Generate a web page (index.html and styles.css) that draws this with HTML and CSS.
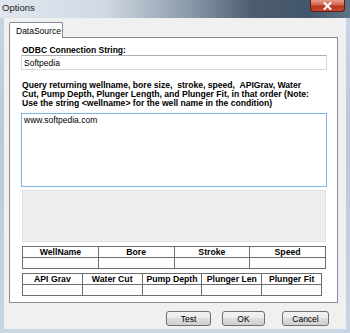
FILE: index.html
```html
<html lang="en">
  <head>
    <title>Options</title>
    <meta charset="utf-8">
    <link rel="stylesheet" href="styles.css">
  </head>
  <body>
    <div class="window">
      <div class="titlebar">
        <span class="title">Options</span>
        <span class="close">
          <svg width="9" height="8" viewBox="0 0 9 8"><path d="M1.5 1 L7.5 7 M7.5 1 L1.5 7" stroke="#fff" stroke-width="2" stroke-linecap="square"/></svg>
        </span>
      </div>
      <div class="client">
        <div class="tabs"><span class="tab">DataSource</span></div>
        <div class="page">
          <label class="lbl">ODBC Connection String:</label>
          <input class="field" type="text" value="Softpedia">
          <p class="lbl query">Query returning wellname, bore size,&nbsp; stroke, speed,&nbsp; APIGrav, Water<br>Cut, Pump Depth, Plunger Length, and Plunger Fit, in that order (Note:<br>Use the string &lt;wellname&gt; for the well name in the condition)</p>
          <textarea class="sql">www.softpedia.com</textarea>
          <div class="grid"></div>
          <table class="cols cols4">
            <tr><th>WellName</th><th>Bore</th><th>Stroke</th><th>Speed</th></tr>
            <tr><td></td><td></td><td></td><td></td></tr>
          </table>
          <table class="cols cols5">
            <tr><th>API Grav</th><th>Water Cut</th><th>Pump Depth</th><th>Plunger Len</th><th>Plunger Fit</th></tr>
            <tr><td></td><td></td><td></td><td></td><td></td></tr>
          </table>
        </div>
        <div class="buttons">
          <button class="btn btn-test">Test</button>
          <button class="btn btn-ok">OK</button>
          <button class="btn btn-cancel">Cancel</button>
        </div>
      </div>
    </div>
  </body>
</html>
```
FILE: styles.css
```css
* { box-sizing: border-box; }
body {
	margin: 0;
	width: 350px;
	height: 333px;
	overflow: hidden;
	font-family: "Liberation Sans", Arial, sans-serif;
	background: linear-gradient(to bottom, #c9d6e4, #b9c9da 40%, #c8d5e2);
}
.window { display: flex; flex-direction: column; height: 333px; }
.titlebar {
	height: 18px;
	display: flex;
	align-items: flex-start;
	justify-content: space-between;
	background: linear-gradient(to right, #dfe6ee 0%, #d0d9e3 30%, #8897a8 55%, #4d5d6f 72%, #43566b 88%, #5e7387 100%);
}
.title { font-size: 9.5px; line-height: 11px; color: #1b1b1b; padding: 2px 0 0 2px; }
.close {
	width: 35px;
	height: 12px;
	margin-right: 5px;
	border: 1px solid #5b1e12;
	border-top: none;
	border-radius: 0 0 4px 4px;
	background: linear-gradient(#e59c88, #d0634b 45%, #b8341d 55%, #c94a2f);
	display: flex;
	align-items: center;
	justify-content: center;
}
.client {
	flex: 1;
	margin: 0 4px 4px;
	background: #f0f0f0;
	padding: 4px 8px 0 5px;
	display: flex;
	flex-direction: column;
}
.tabs { display: flex; height: 15px; }
.tab {
	position: relative;
	z-index: 1;
	width: 54px;
	height: 16px;
	padding: 3px 0 0 6px;
	font-size: 8.5px;
	line-height: 10px;
	color: #000;
	background: #fff;
	border: 1px solid #898c95;
	border-bottom: none;
	border-radius: 2px 2px 0 0;
}
.page {
	height: 266px;
	border: 1px solid #898c95;
	background: #fff;
	padding: 7px 10px 0 12px;
	display: flex;
	flex-direction: column;
}
.lbl { font-size: 8.5px; font-weight: bold; line-height: 10px; color: #000; }
.field {
	height: 15px;
	margin: 0 0 0 -1px;
	width: 306px;
	border: 1px solid #d5d8de;
	border-top-color: #abadb3;
	padding: 0 0 0 2px;
	font-family: "Liberation Sans", Arial, sans-serif;
	font-size: 8.5px;
	color: #000;
}
.query { margin: 11px 0 0; line-height: 9px; font-size: 8.6px; }
.sql {
	height: 74px;
	width: 306px;
	margin: 5px 0 0 -1px;
	border: 1px solid #7eb4ea;
	padding: 1px 2px;
	font-family: "Liberation Sans", Arial, sans-serif;
	font-size: 8.5px;
	line-height: 10px;
	resize: none;
	overflow: hidden;
}
.grid { height: 52px; width: 304px; margin-top: 3px; background: #efefef; border: 1px solid #e2e2e2; }
.cols { border-collapse: collapse; margin-top: 4px; table-layout: fixed; }
.cols4 { width: 304px; }
.cols5 { width: 300px; }
.cols th, .cols td {
	border: 1px solid #6e6e6e;
	height: 11px;
	padding: 0;
	font-size: 8.7px;
	line-height: 10px;
	text-align: center;
	background: #fff;
}
.buttons { display: flex; justify-content: flex-end; margin: 8px 9px 0 0; }
.btn {
	height: 15px;
	padding: 0;
	border: 1px solid #707070;
	border-radius: 3px;
	background: linear-gradient(#f2f2f2, #ebebeb 50%, #dddddd 50%, #cfcfcf);
	font-family: "Liberation Sans", Arial, sans-serif;
	font-size: 8.5px;
	color: #000;
}
.btn-test { width: 45px; }
.btn-ok { width: 43px; margin-left: 11px; }
.btn-cancel { width: 47px; margin-left: 17px; }
```
